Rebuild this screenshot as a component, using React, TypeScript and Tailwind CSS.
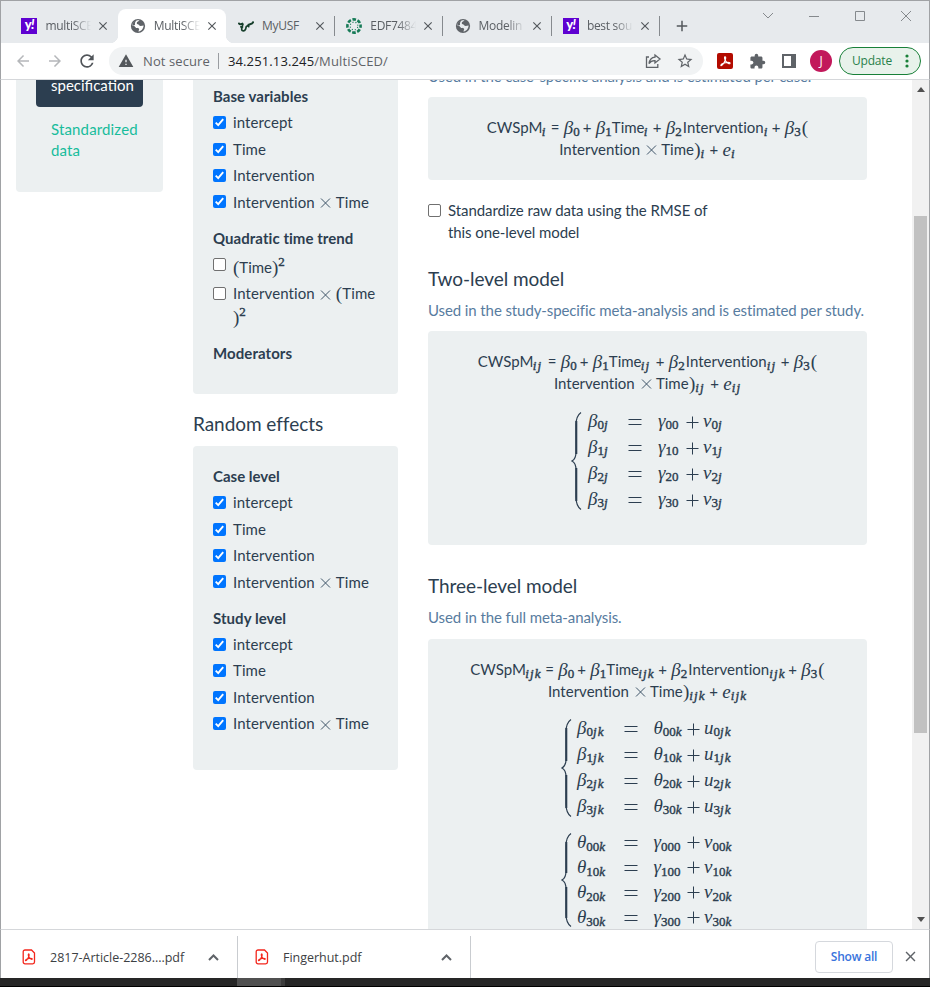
import React from "react";
import { MdRefresh, MdStarBorder, MdExtension, MdWarning, MdArrowBack, MdArrowForward, MdClose, MdAdd } from "react-icons/md";

const UI = "font-['Open_Sans','Noto_Sans',sans-serif]";

function Yahoo() {
  return (
    <div className="flex size-4 items-center justify-center bg-[#5f01d1] font-['Lato',sans-serif] text-[13px] leading-none font-black text-white">
      <span className="-mt-1 tracking-[-0.5px]">y<i>!</i></span>
    </div>
  );
}

function Globe({ land }: { land: string }) {
  return (
    <svg width="16" height="16" viewBox="0 0 16 16">
      <circle cx="8" cy="8" r="7.100" fill="#5f6368" />
      <path d="M9.500 2.300C8.700 3.600 7.200 3.400 6.700 4.900C6.600 6.300 8.600 5.900 9.200 7.200C9.600 8.300 11.300 8 13.600 7.600C13.500 10.500 11.500 13.200 8.600 13.700C8.300 12.300 9.800 11.700 8.900 10.500C7.700 9.500 6 10.300 5.200 9C4.600 7.900 3.500 7.700 2.300 7.500C2.400 4.600 5.200 2 9.500 2.300z" fill={land} />
      <path d="M2.400 7.200C2.500 4.800 4 3.100 5.800 2.600C6 4.200 4.600 4.500 5 6.300C5.400 7.300 4 7.800 2.400 7.200z" fill="#5f6368" />
    </svg>
  );
}

function Bull() {
  return (
    <svg width="16" height="16" viewBox="0 0 16 16" fill="none" stroke="#173f2c">
      <path d="M.6 4.6C1 6.6 2.600 6.600 5.200 5.400" strokeWidth="1.9" />
      <path d="M15.4 3.4C15.2 6.2 12.8 5.800 9.8 7" strokeWidth="1.9" />
      <path d="M5 5.600L3.600 11C3.600 13.300 6.500 13.400 7.500 11.400L8.300 8.600L11.500 6.600M2.200 8.800h3" strokeWidth="1.700" />
      <path d="M9.500 7.400l1.800 1.800" strokeWidth="1.400" />
    </svg>
  );
}

function Canvas() {
  return (
    <svg width="16" height="16" viewBox="0 0 16 16" fill="none" stroke="#177b57">
      <circle cx="8" cy="8" r="6.6" strokeWidth="2.600" strokeDasharray="3.6 1.584" strokeDashoffset="1.8" />
      <circle cx="8" cy="8" r="3.9" strokeWidth="1.1" strokeDasharray="1.1 1.963" strokeDashoffset="-1" />
    </svg>
  );
}

function Acrobat({ size, color }: { size: number; color: string }) {
  return (
    <svg width={size} height={size} viewBox="0 0 16 16" fill="none" stroke={color} strokeWidth="1.4">
      <path d="M7.2 2.3c1.7-.7 1.2 3.2-.6 6.3C5.400 10.800 3.400 13.600 2.400 12.900 1.400 12 5.500 9.700 9.500 9.200c2.800-.4 4.500.3 4 1.200-.7 1.100-3.600-.5-5.200-2.900C6.800 5.400 6.400 2.700 7.200 2.300z" />
    </svg>
  );
}

function PdfFile() {
  return (
    <svg width="14" height="16" viewBox="0 0 14 16" fill="none" stroke="#f3261c">
      <path d="M3 1h6.500l3 3v9a1.800 1.800 0 0 1-1.800 1.800H3A1.800 1.800 0 0 1 1.200 13V2.800A1.800 1.800 0 0 1 3 1z" strokeWidth="1.300" />
      <path d="M6.500 5c1-.3.700 2-.2 3.600C5.500 10.200 4.200 12 3.500 11.500c-.4-.7 2-2 4.200-2.200 1.700-.2 2.900.3 2.500.9-.500.500-2-.4-2.900-1.700C6.300 7 6 5.200 6.500 5z" strokeWidth="1.200" />
    </svg>
  );
}

function Tab({ icon, label, active, bar, fade = true }: { icon: React.ReactNode; label: string; active?: boolean; bar?: boolean; fade?: boolean }) {
  return (
    <div className={`flex w-[108.3px] shrink-0 items-center ${active ? "relative h-[34px] rounded-t-lg bg-white" : "h-[34px]"}`}>
      {active && (
        <>
          <div className="absolute bottom-0 -left-2 size-2 bg-[radial-gradient(circle_at_0_0,#e7eaed_8px,#fff_8.5px)]" />
          <div className="absolute -right-2 bottom-0 size-2 bg-[radial-gradient(circle_at_100%_0,#e7eaed_8px,#fff_8.5px)]" />
        </>
      )}
      <div className="ml-3 flex size-4 shrink-0 items-center justify-center">{icon}</div>
      <div className={`ml-2 w-[46px] shrink-0 text-[12px] tracking-[-0.3px] whitespace-nowrap text-[#5a5e63] ${fade ? "[mask-image:linear-gradient(to_right,#000_60%,transparent)]" : ""}`}>{label}</div>
      <MdClose className="ml-[5px] size-3.5 shrink-0 text-[#54585c]" />
      <div className={`ml-[7px] h-5 w-px shrink-0 ${bar ? "bg-[#868a8e]" : ""}`} />
    </div>
  );
}

function Check({ on = true }: { on?: boolean }) {
  return on ? (
    <div className="flex size-[13px] shrink-0 items-center justify-center rounded-[2px] bg-[#0075ff]">
      <svg width="11" height="11" viewBox="0 0 11 11" fill="none" stroke="#fff" strokeWidth="1.900"><path d="M1.700 5.700l2.500 2.500 5-6" /></svg>
    </div>
  ) : (
    <div className="size-[13px] shrink-0 rounded-[2px] border border-[#707070] bg-white" />
  );
}

function Row({ children }: { children: React.ReactNode }) {
  return (
    <div className="flex h-[26.4px] items-center gap-[7px]">
      <div className="pb-px"><Check /></div>
      <span className="flex items-center gap-1 pb-[0.5px] tracking-[0.1px] [font-variant-ligatures:none]">{children}</span>
    </div>
  );
}

function Checks() {
  return (
    <>
      <Row>intercept</Row>
      <Row>Time</Row>
      <Row>Intervention</Row>
      <Row><span>Intervention</span><Times /><span>Time</span></Row>
    </>
  );
}

function Times() {
  return (
    <svg className="mx-px mt-0.5 inline-block" width="11" height="10" viewBox="0 0 11 10" stroke="#3e5468" strokeWidth="1"><path d="M1 .5l9 9M10 .5l-9 9" /></svg>
  );
}

const SERIF = "font-['Liberation_Serif',serif]";

function Paren({ children }: { children: string }) {
  return <span className={`${SERIF} text-[19px] leading-none`}>{children}</span>;
}

/* A subscript: digits stand upright, letters are italic. */
function Sub({ t, className = "" }: { t: string; className?: string }) {
  return (
    <span className={`${SERIF} inline-flex shrink-0 pt-[9px] text-[13px] leading-none [-webkit-text-stroke:0.4px_#2c3e50] ${className}`}>
      {t.split("").map((c, i) => (
        <span key={i} className={/\d/.test(c) ? "" : "italic tracking-[1.1px]"}>{c}</span>
      ))}
    </span>
  );
}

function Sym({ c, s, className = "" }: { c: string; s: string; className?: string }) {
  return (
    <span className={`inline-flex shrink-0 items-center ${className}`}>
      <span className={`${SERIF} text-[19px] leading-none italic`}>{c}</span>
      <Sub t={s} />
    </span>
  );
}

function Equation({ s }: { s: string }) {
  const w = s.length === 1 ? "w-[5px]" : s.length === 2 ? "w-[11px]" : "w-4";
  return (
    <div className="text-[15px] tracking-[0.02px] [font-variant-ligatures:none]">
      <div className="flex h-[22px] items-center justify-center whitespace-nowrap">
        <span className="w-[55px]">CWSpM</span>
        <Sub t={s} className={w} />
        <span className="ml-1 w-[9px]">=</span>
        <Sym c="β" s="0" className="ml-1 w-4" />
        <span className="ml-[3px] w-[9px]">+</span>
        <Sym c="β" s="1" className="ml-1 w-4" />
        <span className="w-8">Time</span>
        <Sub t={s} className={w} />
        <span className="ml-1 w-[9px]">+</span>
        <Sym c="β" s="2" className="ml-1 w-[17px]" />
        <span className="w-[81px]">Intervention</span>
        <Sub t={s} className={w} />
        <span className="ml-[3px] w-[10px]">+</span>
        <Sym c="β" s="3" className="ml-[3px] w-[17px]" />
        <Paren>(</Paren>
      </div>
      <div className="flex h-[22px] items-center justify-center whitespace-nowrap">
        <span className="w-[81px]">Intervention</span>
        <span className="ml-[5px] flex w-4 items-center"><Times /></span>
        <span className="w-[33px]">Time</span>
        <Paren>)</Paren>
        <Sub t={s} className={w} />
        <span className="ml-1 w-[9px]">+</span>
        <Sym c="e" s={s} className="ml-1" />
      </div>
    </div>
  );
}

function Brace({ h }: { h: number }) {
  const m = h / 2;
  return (
    <svg width="11" height={h} viewBox={`0 0 11 ${h}`} fill="none" stroke="#2c3e50">
      <path d={`M10 .5Q5 4 5 13V${m - 9}Q5 ${m - 2} 1 ${m}Q5 ${m + 2} 5 ${m + 9}V${h - 13}Q5 ${h - 4} 10 ${h - 0.5}`} strokeWidth="1.200" />
      <path d={`M5.300 9V${m - 7}M5.300 ${m + 7}V${h - 9}`} strokeWidth="2" />
    </svg>
  );
}

type Line = [string, string, string, string, string, string];

function System({ rows, tall, wide }: { rows: Line[]; tall?: boolean; wide?: boolean }) {
  const lift = tall ? "pb-1" : "pb-0.5";
  return (
    <div className={`flex items-center ${wide ? "pl-[133px]" : "pl-[143px]"}`}>
      <Brace h={tall ? 98 : 94} />
      <div className={wide ? "ml-[5px]" : "ml-1.5"}>
        {rows.map(([a, as, b, bs, c, cs]) => (
          <div key={as} className={`flex items-center ${tall ? "h-[26px]" : "h-[25px]"}`}>
            <Sym c={a} s={as} className={`${lift} ${wide ? "w-[46.5px]" : "w-[40px]"}`} />
            <svg width="14" height="6" viewBox="0 0 14 6" stroke="#2c3e50"><path d="M.5 .5h13M.5 5.500h13" /></svg>
            <Sym c={b} s={bs} className={`${lift} ml-4 ${wide ? "w-[33.500px]" : "w-[28px]"}`} />
            <svg width="13" height="13" viewBox="0 0 13 13" stroke="#2c3e50"><path d="M.5 6.500h12M6.500 .5v12" /></svg>
            <Sym c={c} s={cs} className={`${lift} ml-1`} />
          </div>
        ))}
      </div>
    </div>
  );
}

function Title({ children }: { children: string }) {
  return <h4 className="flex h-[30px] items-center pb-0.5 text-[19px] tracking-[-0.05px]">{children}</h4>;
}

function Download({ name }: { name: string }) {
  return (
    <div className="flex h-[42px] w-[233px] items-center border-r border-[#c9ccd0]">
      <div className="ml-[17px]"><PdfFile /></div>
      <span className="ml-[14px] flex-1 pt-[3px] text-[12.500px] tracking-[-0.02px] text-[#3c4043]">{name}</span>
      <svg className="mt-[2px] mr-[18px]" width="11" height="7" viewBox="0 0 11 7" fill="none" stroke="#5f6368" strokeWidth="2"><path d="M1 6l4.500-4.500L10 6" /></svg>
    </div>
  );
}

export default function App() {
  return (
    <div className="flex h-[987px] w-[930px] flex-col overflow-hidden bg-white">
      <div className={`${UI} flex h-[43px] shrink-0 items-end border-t border-r border-l border-[#a0a2a5] bg-[#e7eaed]`}>
        <div className="flex h-[34px] flex-1 pl-[8.4px]">
          <Tab icon={<Yahoo />} label="multiSCE" />
          <Tab active icon={<Globe land="#fff" />} label="MultiSCE" />
          <Tab bar fade={false} icon={<Bull />} label="MyUSF" />
          <Tab bar icon={<Canvas />} label="EDF7484" />
          <Tab bar icon={<Globe land="#e7eaed" />} label="Modelin" />
          <Tab bar icon={<Yahoo />} label="best sou" />
          <MdAdd className="mt-2 ml-[14px] size-[18px] text-[#54585c]" />
        </div>
        <div className="flex h-full w-[167px] items-start pt-[9px]">
          <svg width="153" height="12" viewBox="0 0 153 12" fill="none" stroke="#85898d"><path d="M1 3l5 5 5-5M47 6.500h10M93.500 1.500h9v9h-9zM139 1l10 10M149 1l-10 10" /></svg>
        </div>
      </div>
      <div className={`${UI} flex h-[37px] shrink-0 items-center border-x border-b border-x-[#a0a2a5] border-b-[#d5d7da] bg-white`}>
        <MdArrowBack className="ml-[13px] size-[18px] text-[#b5b7ba]" />
        <MdArrowForward className="ml-[14px] size-[18px] text-[#b5b7ba]" />
        <MdRefresh className="ml-[13px] size-5 text-[#505459]" />
        <div className="ml-3 flex h-7 w-[594px] items-center rounded-full bg-[#f1f3f4]">
          <MdWarning className="ml-[9px] size-4 text-[#54585c]" />
          <span className="ml-[9px] pt-px text-[13px] tracking-[0.1px] text-[#5f6368]">Not secure</span>
          <div className="ml-2 h-4 w-px bg-[#9a9da1]" />
          <span className="ml-[9px] flex-1 pt-px text-[13px] tracking-[0.13px] text-[#5f6368]"><span className="text-[#202124]">34.251.13.245</span>/MultiSCED/</span>
          <svg className="mr-[14px]" width="17" height="16" viewBox="0 0 17 16" fill="none" stroke="#5f6368" strokeWidth="1.300"><path d="M4 4H1.500v10.300h11.300V11M10 2l5 4-5 4V7.700C7 7.500 5.400 8.500 4 10.700 4.500 7 6.500 4.500 10 4.200z" /></svg>
          <MdStarBorder className="mr-[9px] size-[18px] text-[#5f6368]" />
        </div>
        <div className="ml-[14px] flex size-4 items-center justify-center rounded-[2px] bg-[#b30b00]"><Acrobat size={13} color="#fff" /></div>
        <MdExtension className="ml-4 size-[17px] text-[#5f6368]" />
        <svg className="ml-4" width="14" height="14" viewBox="0 0 14 14" fill="#5f6368"><path fillRule="evenodd" d="M0 0h14v14H0zM2 2v10h7V2z" /></svg>
        <div className="ml-[14px] flex size-[22px] items-center justify-center rounded-full bg-[#c2185b] text-[12px] text-white">J</div>
        <div className="ml-[7px] flex h-7 w-[82px] items-center rounded-full border border-[#188038] bg-[#e8f2eb] text-[12px] text-[#28804a]">
          <span className="ml-3 flex-1 tracking-[-0.2px]">Update</span>
          <svg className="mr-[11px]" width="4" height="14" viewBox="0 0 4 14" fill="#188038"><circle cx="2" cy="2" r="1.600" /><circle cx="2" cy="7" r="1.600" /><circle cx="2" cy="12" r="1.600" /></svg>
        </div>
      </div>

      <div className="flex h-[849px] shrink-0 items-start overflow-hidden border-x border-[#a0a2a5] font-['Lato',sans-serif] text-[15px] leading-[21px] text-[#2c3e50]">
        <nav className="ml-[15px] h-[112px] w-[147px] rounded-b bg-[#ecf0f1] px-5">
          <div className="h-[27px] rounded-b bg-[#2c3e50] pl-[15px] text-white">
            <div className="relative -top-[5px]">specification</div>
          </div>
          <div className="mt-3 pl-[15px] tracking-[0.15px] text-[#18bc9c]">Standardized data</div>
        </nav>

        <div className="ml-[30px] w-[205px]">
          <section className="h-[314px] rounded-b bg-[#ecf0f1] px-5 pt-[4px]">
            <div className="flex h-[26px] items-center pb-0.5 font-bold tracking-[0.05px]">Base variables</div>
            <Checks />
            <div className="mt-[10px] flex h-[26px] items-center font-bold tracking-[0.05px]">Quadratic time trend</div>
            <div className="mt-[3px] flex h-[28px] gap-[7px]">
              <div className="pt-[3px]"><Check on={false} /></div>
              <div className="flex h-[26px] items-center"><Paren>(</Paren>Time<Paren>)</Paren><span className={`${SERIF} pb-3 text-[13px] leading-none [-webkit-text-stroke:0.4px_#2c3e50]`}>2</span></div>
            </div>
            <div className="flex h-[50px] gap-[7px]">
              <div className="pt-1"><Check on={false} /></div>
              <div>
                <div className="flex h-[22px] items-center gap-1 tracking-[0.1px] whitespace-nowrap [font-variant-ligatures:none]"><span>Intervention</span><Times /><span className="flex items-center"><Paren>(</Paren>Time</span></div>
                <div className="flex h-[26px] items-center"><Paren>)</Paren><span className={`${SERIF} pb-3 text-[13px] leading-none [-webkit-text-stroke:0.4px_#2c3e50]`}>2</span></div>
              </div>
            </div>
            <div className="mt-2 flex h-[26px] items-center font-bold tracking-[0.08px]">Moderators</div>
          </section>
          <div className="mt-[15px]"><Title>Random effects</Title></div>
          <section className="mt-[7px] h-[324px] rounded bg-[#ecf0f1] px-5 pt-[18px]">
            <div className="flex h-[26px] items-center pb-0.5 font-bold">Case level</div>
            <Checks />
            <div className="mt-[10px] flex h-[26px] items-center font-bold tracking-[0.05px]">Study level</div>
            <Checks />
          </section>
        </div>

        <main className="ml-[30px] w-[439px]">
          <div className="-mt-[14px] tracking-[-0.11px] whitespace-nowrap text-[#587ca0]">Used in the case-specific analysis and is estimated per case.</div>
          <section className="mt-[10px] h-[83px] rounded bg-[#ecf0f1] pt-[19px]"><Equation s="i" /></section>
          <div className="mt-5 flex gap-[7px]">
            <div className="pt-1"><Check on={false} /></div>
            <div className="-mt-px w-[270px] leading-[22px] tracking-[-0.08px]">Standardize raw data using the RMSE of this one-level model</div>
          </div>
          <div className="mt-[21px]"><Title>Two-level model</Title></div>
          <div className="mt-[6px] tracking-[-0.1px] whitespace-nowrap text-[#587ca0]">Used in the study-specific meta-analysis and is estimated per study.</div>
          <section className="mt-[10px] h-[214px] rounded bg-[#ecf0f1] pt-[19px]">
            <Equation s="ij" />
            <div className="mt-[15px]">
              <System tall rows={[["β", "0j", "γ", "00", "v", "0j"], ["β", "1j", "γ", "10", "v", "1j"], ["β", "2j", "γ", "20", "v", "2j"], ["β", "3j", "γ", "30", "v", "3j"]]} />
            </div>
          </section>
          <div className="mt-[26px]"><Title>Three-level model</Title></div>
          <div className="mt-[6px] tracking-[-0.09px] text-[#587ca0]">Used in the full meta-analysis.</div>
          <section className="mt-[11px] h-[330px] rounded bg-[#ecf0f1] pt-[19px]">
            <Equation s="ijk" />
            <div className="mt-[14px]">
              <System tall wide rows={[["β", "0jk", "θ", "00k", "u", "0jk"], ["β", "1jk", "θ", "10k", "u", "1jk"], ["β", "2jk", "θ", "20k", "u", "2jk"], ["β", "3jk", "θ", "30k", "u", "3jk"]]} />
            </div>
            <div className="mt-[10px]">
              <System wide rows={[["θ", "00k", "γ", "000", "v", "00k"], ["θ", "10k", "γ", "100", "v", "10k"], ["θ", "20k", "γ", "200", "v", "20k"], ["θ", "30k", "γ", "300", "v", "30k"]]} />
            </div>
          </section>
        </main>

        <div className="ml-auto flex h-[849px] w-[17px] flex-col items-center bg-[#f1f1f1]">
          <svg className="mt-[7px]" width="8" height="5" viewBox="0 0 8 5" fill="#505050"><path d="M4 0l4 5H0z" /></svg>
          <div className="mt-[124px] h-[517px] w-[13px] bg-[#c1c1c1]" />
          <svg className="mt-auto mb-[7px]" width="8" height="5" viewBox="0 0 8 5" fill="#505050"><path d="M4 5L0 0h8z" /></svg>
        </div>
      </div>

      <div className={`${UI} flex h-[49px] shrink-0 items-center border-x border-t border-x-[#a0a2a5] border-t-[#d5d7da] bg-white pt-[5px]`}>
        <div className="pl-1"><Download name="2817-Article-2286....pdf" /></div>
        <Download name="Fingerhut.pdf" />
        <div className="ml-auto flex h-8 w-[78px] items-center justify-center rounded border border-[#d5d8dd] text-[12px] font-semibold tracking-[-0.2px] text-[#3973dc]">Show all</div>
        <MdClose className="mr-[10px] ml-[9px] size-[17px] text-[#5f6368]" />
      </div>
      <div className="flex h-[9px] shrink-0 border-b border-black bg-[#262626]">
        <div className="ml-[237px] h-2 w-[44px] bg-[#505050]" />
        <div className="h-2 w-[4px] bg-[#3c3c3c]" />
      </div>
    </div>
  );
}
